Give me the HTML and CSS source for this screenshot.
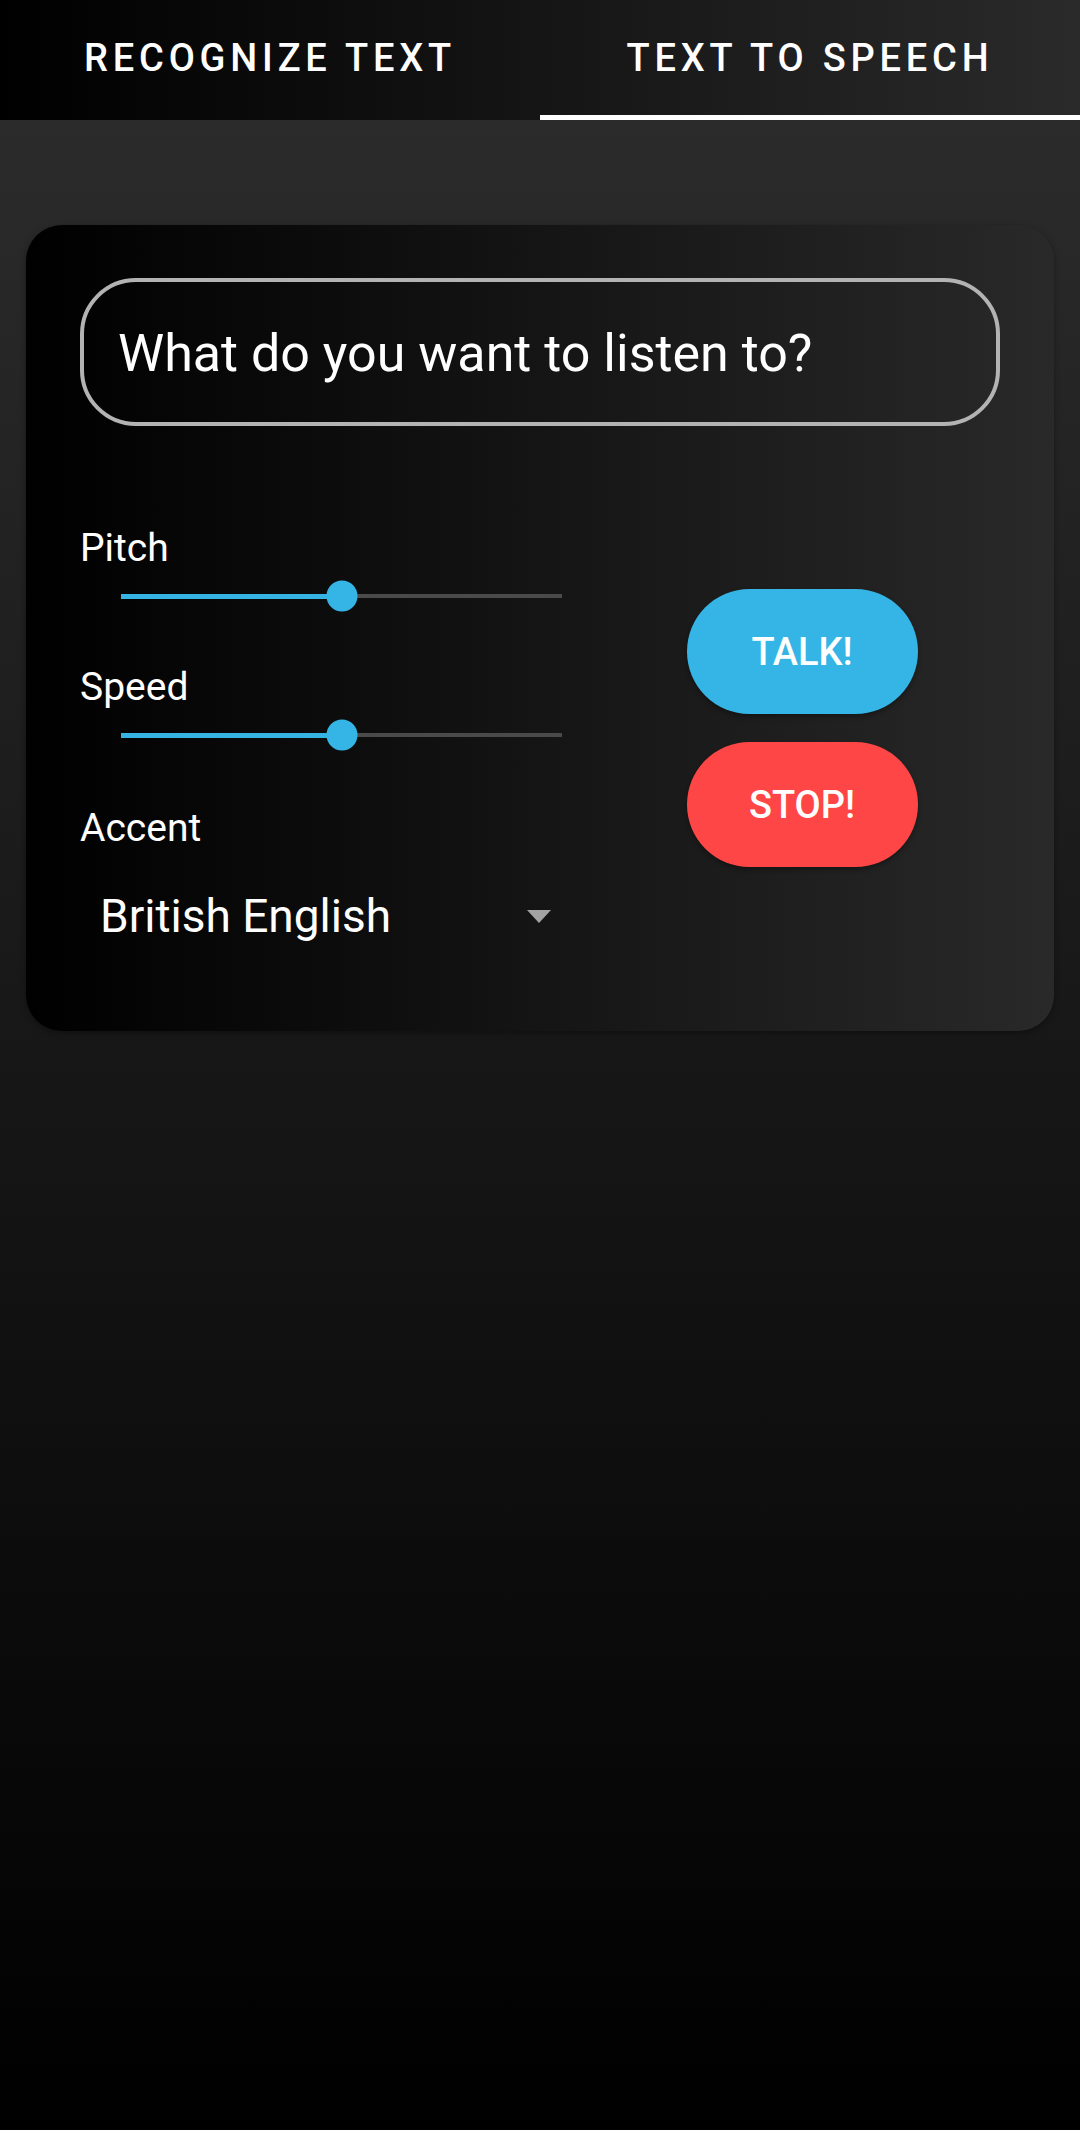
FILE: index.html
```html
<!DOCTYPE html>
<html>
<head>
<meta charset="utf-8">
<link rel="stylesheet" href="styles.css">
</head>
<body>
<div class="app">
  <nav class="tabs">
    <div class="tab">RECOGNIZE TEXT</div>
    <div class="tab active">TEXT TO SPEECH</div>
  </nav>
  <main class="content">
    <section class="card">
      <div class="input">What do you want to listen to?</div>
      <div class="controls">
        <div class="left">
          <div class="label">Pitch</div>
          <div class="slider"><div class="track"><div class="fill" style="width:50%"></div><div class="thumb" style="left:50%"></div></div></div>
          <div class="label">Speed</div>
          <div class="slider"><div class="track"><div class="fill" style="width:50%"></div><div class="thumb" style="left:50%"></div></div></div>
          <div class="label">Accent</div>
          <div class="dropdown">
            <span class="value">British English</span>
            <svg class="caret" width="24" height="13" viewBox="0 0 24 13"><polygon points="0,0 24,0 12,13" fill="#a3a3a3"/></svg>
          </div>
        </div>
        <div class="right">
          <button class="btn talk">TALK!</button>
          <button class="btn stop">STOP!</button>
        </div>
      </div>
    </section>
  </main>
</div>
</body>
</html>
```
FILE: styles.css
```css
html, body {
  margin: 0;
  padding: 0;
}
body {
  width: 1080px;
  height: 2130px;
  font-family: Roboto, "Noto Sans", sans-serif;
  color: #fff;
  background: linear-gradient(to bottom, #2c2b2c 120px, #000 2130px);
}
.app {
  display: flex;
  flex-direction: column;
}
.tabs {
  display: flex;
  height: 120px;
  background: linear-gradient(to right, #000 0%, #2b2a2b 100%);
}
.tab {
  flex: 1;
  display: flex;
  align-items: center;
  justify-content: center;
  font-size: 38px;
  font-weight: 500;
  letter-spacing: 4.8px;
  color: #fff;
  padding-bottom: 4px;
  box-sizing: border-box;
}
.tab.active {
  border-bottom: 5px solid #fff;
  padding-bottom: 0;
}
.content {
  padding: 105px 26px 0 26px;
}
.card {
  height: 806px;
  box-sizing: border-box;
  border-radius: 36px;
  background: linear-gradient(to right, #000 0%, #2a292a 100%);
  padding: 53px 54px 0 54px;
  box-shadow: 0 2px 6px rgba(0,0,0,0.35);
}
.input {
  height: 148px;
  box-sizing: border-box;
  border: 4px solid #b3b3b3;
  border-radius: 56px;
  display: flex;
  align-items: center;
  padding-left: 34px;
  padding-top: 3px;
  font-size: 52px;
  color: #fff;
}
.controls {
  display: flex;
  margin-top: 99px;
}
.left {
  width: 482px;
  display: flex;
  flex-direction: column;
}
.label {
  font-size: 39px;
  line-height: 46px;
  height: 46px;
}
.slider {
  height: 50px;
  padding: 0 0 0 41px;
  display: flex;
  align-items: center;
  margin-bottom: 43px;
}
.slider + .label + .slider {
  margin-bottom: 45px;
}
.track {
  position: relative;
  width: 441px;
  height: 4px;
  background: #4a4a4a;
}
.fill {
  height: 5px;
  margin-top: -0.5px;
  background: #35b4e3;
}
.thumb {
  position: absolute;
  top: 50%;
  width: 31px;
  height: 31px;
  border-radius: 50%;
  background: #35b5e5;
  transform: translate(-50%, -50%);
}
.dropdown {
  margin-top: 20px;
  height: 90px;
  display: flex;
  align-items: center;
  justify-content: space-between;
  padding: 0 11px 0 20px;
}
.value {
  font-size: 46px;
}
.caret {
  display: block;
}
.right {
  flex: 1;
  display: flex;
  flex-direction: column;
  align-items: center;
  padding-top: 64px;
  padding-left: 42px;
  gap: 28px;
}
.btn {
  width: 231px;
  height: 125px;
  border: none;
  border-radius: 63px;
  font-family: Roboto, "Noto Sans", sans-serif;
  font-size: 38px;
  font-weight: 500;
  color: #fff;
  box-shadow: 0 3px 5px rgba(0,0,0,0.3);
}
.talk {
  background: #35b5e5;
}
.stop {
  background: #ff4646;
}
```
